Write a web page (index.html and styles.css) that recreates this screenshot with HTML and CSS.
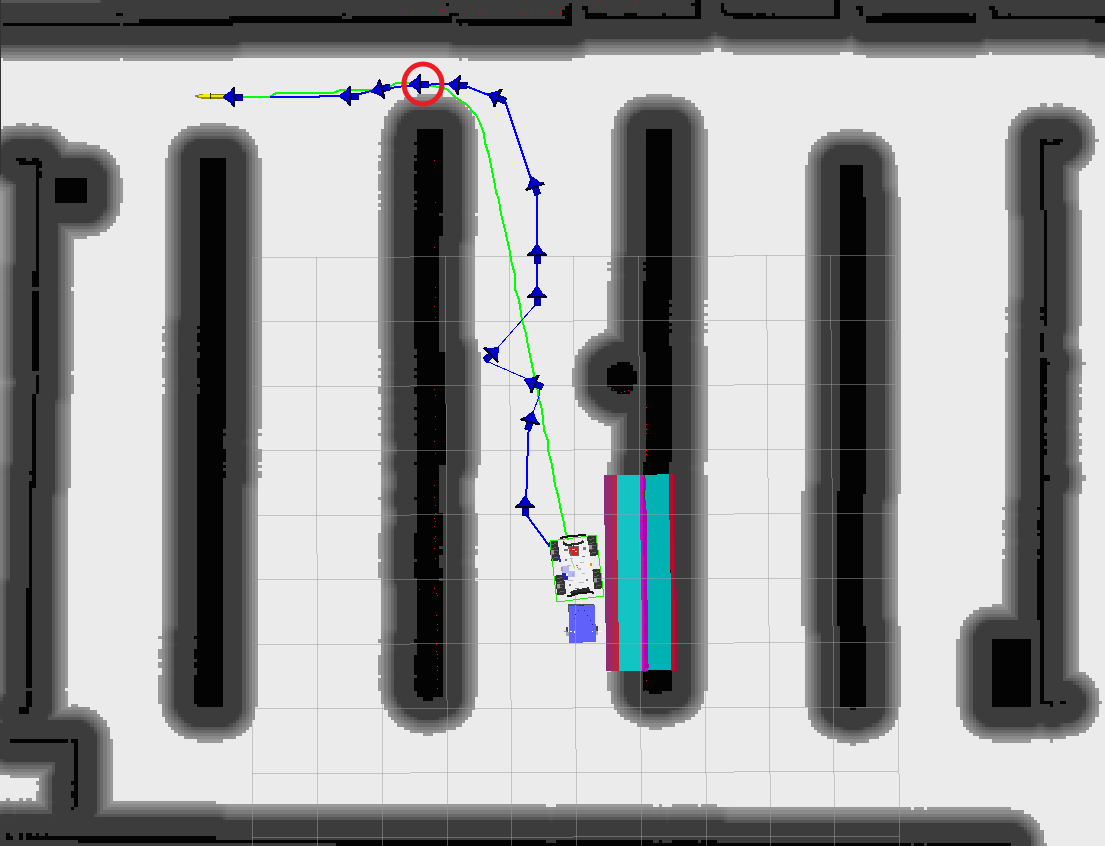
FILE: index.html
```html
<!DOCTYPE html>
<html lang="en">
<head>
<meta charset="utf-8">
<title>Costmap</title>
<link rel="stylesheet" href="styles.css">
</head>
<body>
<main class="map">
<canvas class="costmap" width="342" height="262"></canvas>
<svg class="overlay" viewBox="0 0 1105 846" aria-hidden="true">
  <defs>
    <g id="pose">
      <path class="pose-edge" d="M-3-7L-1-10H1V10H-1L-3 7Z"/>
      <path class="pose-cone" d="M-12 0L-1-8V8Z"/>
      <path class="pose-shade" d="M-11 0L-1 4V8Z"/>
      <path class="pose-shaft" d="M1-3H8V3H1Z"/>
    </g>
    <g id="wheel">
      <rect class="tyre" x="-4" y="-10" width="9" height="20" rx="2"/>
      <path class="tread" d="M-2-7H3M-3-3H2M-1 0H4M-3 3H2M-2 7H3"/>
      <path class="hub" d="M-3-1H0V3H-3Z"/>
    </g>
    <linearGradient id="edge" x1="0" x2="1" y1="0" y2="0">
      <stop offset="0" stop-color="#872e80"/><stop offset=".45" stop-color="#a02862"/><stop offset=".75" stop-color="#b82440"/><stop offset="1" stop-color="#c62030"/>
    </linearGradient>
  </defs>

  <path class="border" d="M0 0H1V175H0Z"/>
  <g class="scan"></g>

  <g class="footprint">
    <path fill="url(#edge)" d="M604 475H617L620 671H606Z"/>
    <path fill="#14c4c4" d="M617 475H641L643 671H619V622H618V560H617Z"/>
    <path fill="#00b2b4" d="M645 475L669 474L672 670H646Z"/>
    <path fill="#c010c4" d="M640 475H644V520L645 620L648 664V671H642V600H641V540H640Z"/>
    <path fill="#b000b0" d="M643 478H646V490H644V500H646V510H647V600H648V664H649V668H645V671H644L644 580L643 530Z"/>
    <path fill="#b40f28" d="M669 474H673L674 560L676 671H671V570H670V520H669Z"/>
    <path fill="#980f3c" d="M673 474H675L676 560L678 671H675V600H674Z"/>
  </g>
  <g class="grid"></g>
  <g class="scan front"></g>

  <g class="goal">
    <path fill="#8a8200" d="M208 94H243V99H208Z"/>
    <path fill="#f0e800" d="M210 95H242V97H210Z"/>
    <path fill="#9a9200" d="M195 95L203 94H210V99H203L195 97Z"/>
    <path fill="#f8f000" d="M197 96L205 94H210V97H200Z"/>
    <path fill="#302c00" d="M210 93H211V99H210Z"/>
  </g>

  <polyline class="global" points="240,97 270,97 276,93 333,93 340,90 372,90 391,86 396,83 414,83 422,85 430,86 441,87 448,90 455,97 466,104 476,115 480,123 484,134 485,143 489,155 491,166 494,180 496,192 499,200 501,214 505,230 510,252 511,260 515,275 515,289 519,300 522,320 526,334 528,346 531,360 534,375 537,384 538,395 542,410 544,430 548,441 548,450 552,465 555,485 558,495 561,511 564,523 565,530 568,540"/>
  <polyline class="local" points="270,97 318,97 321,96 352,96 375,90 405,86 440,84 457,85 466,86 488,95 505,101 533,185 537,192 537,303"/>
  <polyline class="local thin" points="537,303 486,361 532,381 540,386 539,396 533,413"/>
  <polyline class="local" points="529,425 528,440 527,474 526,505 525,513 550,547"/>
  <g class="poses">
    <use href="#pose" transform="translate(234 97)"/>
    <use href="#pose" transform="translate(350 96)"/>
    <use href="#pose" transform="translate(382 89) rotate(-15)"/>
    <use href="#pose" transform="translate(420 84)"/>
    <use href="#pose" transform="translate(459 85) rotate(6)"/>
    <use href="#pose" transform="translate(498 98) rotate(22)"/>
    <use href="#pose" transform="translate(535 187) rotate(70)"/>
    <use href="#pose" transform="translate(537 255) rotate(90)"/>
    <use href="#pose" transform="translate(537 297) rotate(90)"/>
    <use href="#pose" transform="translate(491 355) rotate(136)"/>
    <use href="#pose" transform="translate(535 384) rotate(22)"/>
    <use href="#pose" transform="translate(530 422) rotate(106)"/>
    <use href="#pose" transform="translate(525 507) rotate(90)"/>
  </g>
  <ellipse class="marker" cx="423" cy="84" rx="19" ry="20"/>

  <g class="robot">
    <use href="#wheel" transform="translate(554 551) rotate(-7)"/>
    <use href="#wheel" transform="translate(592 546) rotate(-7)"/>
    <use href="#wheel" transform="translate(560 585) rotate(-7)"/>
    <use href="#wheel" transform="translate(597 579) rotate(-7)"/>
    <path fill="#f0f0f3" d="M562 544L588 541L590 556L592 565L594 588L570 592L565 578L561 560Z"/>
    <path class="bumper-dark" d="M563 541L568 544L581 542L583 539L584 543L577 545L567 546L563 545Z"/>
    <path class="bumper" d="M560 538L570 536L586 535"/>
    <path class="bumper-dark" d="M570 592L574 590L589 587L590 591L582 593L573 596Z"/>
    <path class="bumper" d="M567 596H571L574 594L592 592L594 594"/>
    <path fill="#777" d="M564 549H568V551H564ZM583 547H586V550H583ZM565 559H567V561H565ZM582 556H585V557H582ZM569 584H571V586H569ZM586 579H588V581H586ZM575 588H579V589H575Z"/>
    <path fill="#bbb" d="M567 565H571V566H567ZM578 568H581V570H578ZM572 573H574V576H572ZM582 573H585V574H582ZM568 580H573V581H568ZM579 582H584V583H579ZM570 558H573V559H570ZM580 562H584V563H580Z"/>
    <path fill="#666" d="M568 546H579V556H570Z"/>
    <path fill="#d8201c" d="M570 547H578V555H572V552H570Z"/>
    <path fill="#ffd8d0" d="M572 549H575V550H572ZM575 551H577V552H575Z"/>
    <path fill="#c8a000" d="M561 567H563V571H561ZM590 563H592V566H590Z"/>
    <path fill="#2424c4" d="M558 556H560V559H558ZM559 559H561V562H559ZM562 573H566V576H562ZM564 576H568V580H564ZM573 544H574V547H573Z"/>
    <path fill="#a0a0ee" opacity=".7" d="M562 566H569V571H575V577H568V573H562Z"/>
    <path fill="#d05070" d="M576 565H578V566H576ZM577 567H578V568H577Z"/>
    <path fill="none" stroke="#9fdf9f" d="M571 559L575 569"/>
    <path class="outline" d="M550 541L596 535L604 596L557 602Z"/>
  </g>

  <g class="trailer">
    <path fill="#555" d="M568 604H594V607H570V612H568ZM569 637H571V642H569Z"/>
    <path fill="#6060fa" d="M569 606L595 605L596 642L569 643Z"/>
    <path fill="none" stroke="#8080e0" d="M575 605V643"/>
    <path fill="#222288" d="M574 618h1v1h-1zM575 614h1v1h-1zM578 610h1v1h-1zM584 610h1v1h-1zM587 615h1v1h-1zM590 620h1v1h-1zM592 624h1v1h-1zM579 605h2v1h-2zM582 605h2v1h-2z"/>
    <path fill="#5a3a38" d="M566 627h2v5h-2zM596 626h2v5h-2z"/>
    <path fill="#aaa" d="M566 632h3v4h-3zM596 631h2v4h-2z"/>
    <path fill="#fff" d="M570 631h2v1h-2zM574 631h1v2h-1zM592 631h2v1h-2zM598 631h4v1h-4zM581 602h1v2h-1z"/>
    <path fill="#20d050" d="M564 631h3v1h-3z"/>
    <path fill="#1898a8" d="M593 630h3v2h-3z"/>
  </g>
</svg>
</main>
<script src="map.js"></script>
</body>
</html>
```
FILE: styles.css
```css
body {
  margin: 0;
  background: #ebebeb;
}
.map {
  position: relative;
  width: 100%;
  aspect-ratio: 1105 / 846;
  overflow: hidden;
}
.costmap {
  display: block;
  width: 100%;
  height: 100%;
  image-rendering: pixelated;
}
.overlay {
  position: absolute;
  inset: 0;
  width: 100%;
  height: 100%;
  shape-rendering: crispEdges;
}
.border { fill: #333; }
.grid {
  fill: none;
  stroke: rgba(156, 156, 156, 0.5);
  stroke-width: 1;
}
.scan { fill: #f00000; }
.global,
.local {
  fill: none;
  stroke-width: 2;
}
.global { stroke: #00ff00; }
.local { stroke: #0000ff; }
.local.thin { stroke-width: 1; }
.pose-edge { fill: #000022; }
.pose-cone { fill: #0000cc; }
.pose-shade { fill: #00009c; }
.pose-shaft {
  fill: #0000c0;
  stroke: #000080;
  stroke-width: 1;
}
.marker {
  fill: none;
  stroke: #ed1c24;
  stroke-width: 5;
  shape-rendering: auto;
}
.tyre { fill: #333; }
.tread {
  fill: none;
  stroke: #606060;
  stroke-width: 1;
}
.hub { fill: #999; }
.bumper {
  fill: none;
  stroke: #151515;
  stroke-width: 2;
}
.bumper-dark { fill: #2a2a2a; }
.outline {
  fill: none;
  stroke: #20f000;
  stroke-width: 1;
}
```
FILE: map.js
```js
// Occupied areas of the static map: left, top, right, bottom.
const occupied = [
  // top wall
  [4,21,68,24],[7,24,118,27],[75,21,94,24],[99,21,103,24],[116,14,123,17],[122,23,232,27],[140,20,232,24],
  [228,17,341,23],[341,13,347,17],[341,18,370,20],[353,16,370,19],[363,20,366,23],
  [370,16,453,22],[450,13,458,16],[446,3,450,7],[457,19,571,22],[467,22,506,25],[459,22,462,25],[506,19,571,25],[565,6,571,24],[562,9,566,16],[568,3,571,8],
  [582,6,587,9],[584,8,587,18],[584,15,700,18],[584,12,607,16],[623,12,636,16],[661,12,664,15],[693,2,697,7],[696,0,700,6],[696,8,700,18],
  [719,2,725,9],[722,9,728,12],[725,12,735,17],[735,12,748,18],[735,15,838,18],[751,12,754,15],[757,12,761,15],[764,12,767,15],[773,12,777,15],
  [834,0,841,5],[834,8,841,18],[857,5,860,10],[860,8,863,17],[866,17,975,21],[882,14,969,18],[972,14,975,21],
  [988,8,995,11],[992,5,995,11],[991,11,998,16],[991,17,1105,20],[1007,14,1011,17],[1094,20,1105,23],
  // left wall
  [17,158,26,162],[20,162,40,165],[33,158,39,162],[38,162,42,168],[38,171,42,178],[36,165,39,271],[32,271,39,287],[32,290,39,372],
  [36,376,39,394],[32,394,35,486],[29,470,32,473],[29,480,32,589],[26,589,32,600],[26,602,32,614],[29,600,32,614],[25,614,32,689],[25,692,32,706],[19,706,29,712],
  [55,177,87,203],
  [9,741,68,744],[12,738,35,742],[38,738,45,742],[64,738,67,742],[70,738,77,744],[74,738,77,808],[70,780,74,783],[70,790,74,796],[70,806,74,808],
  // shelf 1
  [200,158,225,400],[196,325,200,328],[196,334,200,341],[196,344,200,353],[196,357,200,379],[196,383,200,389],[196,395,222,706],
  [222,397,225,431],[222,434,225,437],[222,450,225,454],[222,456,225,463],[222,466,225,469],[222,471,225,479],[193,637,196,640],[193,650,196,660],[193,663,196,670],[193,676,196,705],[203,705,213,708],
  // shelf 2
  [418,128,444,213],[418,212,441,220],[418,216,444,237],[418,237,441,352],[415,141,418,144],[415,154,418,157],[415,163,418,170],[415,174,418,190],[415,195,418,200],[415,204,418,207],[415,210,418,350],
  [418,352,447,465],[412,356,415,359],[415,369,418,372],[415,374,418,378],[415,389,418,394],[412,407,415,411],[415,417,418,421],[415,433,418,436],
  [416,460,441,510],[416,505,438,585],[438,515,441,546],[438,550,441,555],[438,568,442,578],[412,461,415,465],[412,498,416,501],[412,533,416,560],[412,563,416,578],[416,580,442,640],
  [412,640,442,643],[412,655,442,675],[416,640,442,697],[412,679,442,690],[422,697,432,700],
  // shelf 3
  [646,130,671,300],[643,262,646,265],[643,269,646,272],[643,280,646,300],[643,300,669,332],[669,303,672,308],[669,313,672,316],[669,322,672,326],[669,329,672,332],
  [644,332,669,352],[647,345,673,461],[644,461,670,475],[645,475,671,690],[642,671,646,690],[651,690,661,693],
  // column
  [617,361,631,394],[611,364,634,391],[608,367,634,388],[607,371,637,384],
  // shelf 4
  [839,165,864,198],[839,198,865,300],[840,300,866,493],[838,491,864,625],[838,493,841,507],[839,625,865,706],[849,706,855,709],
  // right wall
  [1041,139,1047,145],[1041,142,1060,145],[1053,138,1063,142],[1041,139,1044,210],[1042,210,1045,325],[1039,308,1042,312],[1039,315,1042,318],[1039,334,1042,344],[1039,347,1042,351],
  [1039,357,1046,385],[1046,363,1049,366],[1040,385,1043,460],[1043,389,1046,395],[1043,398,1046,411],[1043,415,1046,424],[1043,434,1046,437],[1043,440,1046,444],[1043,450,1046,456],
  [1041,455,1044,632],[1044,476,1050,482],[1038,508,1041,511],[1038,521,1041,530],[1038,534,1041,537],[1038,550,1041,557],[1038,560,1042,621],[1041,627,1045,634],[1040,630,1042,705],[1040,702,1052,705],[1049,705,1052,708],[1059,702,1065,705],
  [993,638,1032,706],
  // bottom wall
  [6,832,11,839],[11,835,14,839],[19,832,22,839],[25,835,206,838],[25,832,32,836],[35,832,38,835],[45,832,48,835],[206,835,209,838],[209,835,215,838],
  [77,838,100,841],[100,838,253,841],[222,841,231,844],[233,841,253,844],[235,838,336,843],[258,841,284,844],[336,841,546,846],[546,842,555,846],[555,840,652,846],[652,842,672,846],[659,840,662,843],[672,840,698,846],[698,842,716,846],[702,840,716,843],[735,842,911,846],[716,842,735,846],[914,843,924,846],[928,843,1011,846]
];

const canvas = document.querySelector('.costmap');
const cols = canvas.width;
const rows = canvas.height;
const unitX = 1105 / cols;
const unitY = 846 / rows;
const blocked = new Set();
for (const [l, t, r, b] of occupied) {
  const c0 = Math.round(l / unitX);
  const r0 = Math.round(t / unitY);
  const c1 = Math.max(c0 + 1, Math.round(r / unitX));
  const r1 = Math.max(r0 + 1, Math.round(b / unitY));
  for (let y = r0; y < r1; y++) {
    for (let x = c0; x < c1; x++) {
      if (x < cols && y < rows) blocked.add(y * cols + x);
    }
  }
}

// Distance in cells to the closest occupied cell, up to the inflation radius.
const radius = 11;
const distance = new Float32Array(cols * rows).fill(99);
for (const cell of blocked) {
  const cx = cell % cols;
  const cy = Math.floor(cell / cols);
  for (let dy = -radius; dy <= radius; dy++) {
    for (let dx = -radius; dx <= radius; dx++) {
      const x = cx + dx;
      const y = cy + dy;
      if (x < 0 || y < 0 || x >= cols || y >= rows) continue;
      const d = Math.hypot(dx, dy);
      const i = y * cols + x;
      if (d < distance[i]) distance[i] = d;
    }
  }
}

const stops = [[0, 3], [0.5, 60], [6.2, 60], [7, 86], [8, 105], [9, 123], [10, 139], [11, 153]];
function shade(d) {
  if (d === 0) return 3;
  if (d > radius) return 235;
  for (let i = 2; i < stops.length; i++) {
    if (d <= stops[i][0]) {
      const [d0, g0] = stops[i - 1];
      const [d1, g1] = stops[i];
      return g0 + (g1 - g0) * (d - d0) / (d1 - d0);
    }
  }
  return 153;
}
const context = canvas.getContext('2d');
const cells = context.createImageData(cols, rows);
distance.forEach((d, i) => {
  const g = shade(d);
  cells.data.set([g, g, g, 255], i * 4);
});
context.putImageData(cells, 0, 0);

const svgNs = 'http://www.w3.org/2000/svg';
function addPath(parent, d) {
  const path = document.createElementNS(svgNs, 'path');
  path.setAttribute('d', d);
  document.querySelector(parent).append(path);
}

// Reference grid, turned slightly against the map.
const tops = [252, 316, 381, 445, 509, 573, 638, 702, 766, 830, 895];
const feet = [252, 317, 382, 447, 511, 576, 641, 706, 770, 834, 899];
tops.forEach((x, i) => addPath('.grid', `M${x + 0.5} ${257 - i * 0.2}L${feet[i] + 0.5} 846`));
for (let i = 0; i < 10; i++) {
  const y = 257.5 + i * 64.5;
  addPath('.grid', `M252 ${y}L${895 + i * 0.4} ${y - 2}`);
}

// Laser scan returns.
const back = [[401,9],[412,11],[432,9],[442,10],[472,13],[482,13],[522,13],[531,11],[541,12],[550,12],[560,12],[598,5],[636,5],[643,140],
  [434,160],[435,202],[434,247],[435,287],[435,297],[434,306],[435,317],[434,389],[435,395],[435,416],[435,429],[434,441],[435,453],[434,485],[434,497],[435,505],[435,513],[434,518],[435,521],[434,526],[435,536],[434,538],[435,541],[434,548],[435,558],[419,589],[434,588],[436,593],[437,595],
  [436,615],[437,624],[437,630],[436,644],[436,651],[437,654],[437,658],[437,666],[437,670],[437,679],[437,688],[437,703],
  [645,361],[645,371],[645,402],[646,407],[646,424],[646,429],[646,433],[646,450],[646,454],[642,465],[642,469],
  [610,387],[613,389],[621,392],[624,391],[628,390],[646,680],[645,690]];
const front = [];
for (let y = 478; y < 668; y += 7) front.push([642 + Math.floor((y - 478) / 65) + y % 2, y]);
const dots = list => list.map(([x, y]) => `M${x} ${y}h1v1h-1z`).join('');
addPath('.scan', dots(back));
addPath('.front', dots(front));
```
